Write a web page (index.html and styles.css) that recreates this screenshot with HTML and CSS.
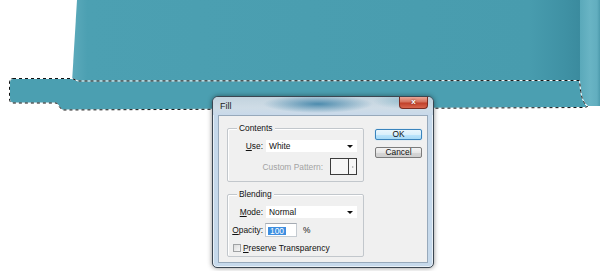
FILE: index.html
```html
<!DOCTYPE html>
<html lang="en">
<head>
    <meta charset="UTF-8">
    <title>Fill</title>
    <link rel="stylesheet" href="styles.css">
</head>
<body>
    <div class="canvas">
        <svg class="art" width="600" height="271" viewBox="0 0 600 271">
            <defs>
                <linearGradient id="body" x1="72" y1="0" x2="580" y2="0" gradientUnits="userSpaceOnUse">
                    <stop offset="0" stop-color="#5caabb"/>
                    <stop offset="0.03" stop-color="#4ca0b2"/>
                    <stop offset="0.9" stop-color="#489cae"/>
                    <stop offset="0.97" stop-color="#3f91a4"/>
                    <stop offset="1" stop-color="#3b8b9e"/>
                </linearGradient>
                <linearGradient id="side" x1="580" y1="0" x2="600" y2="0" gradientUnits="userSpaceOnUse">
                    <stop offset="0" stop-color="#5aa9ba"/>
                    <stop offset="0.5" stop-color="#69b4c4"/>
                    <stop offset="0.85" stop-color="#62aebf"/>
                    <stop offset="1" stop-color="#4d9bad"/>
                </linearGradient>
            </defs>
            <!-- tray body -->
            <polygon points="77,0 580,0 580,82 72,82" fill="url(#body)"/>
            <path d="M580 0 L600 0 L600 106 L588 106 Q581 100 580 88 Z" fill="url(#side)"/>
            <!-- selected base strip -->
            <path d="M13 78.5 L72 78.5 L78 81 L579.5 80.5 L580.5 90 Q582 102 587.5 106.5 L585 107.5 L62 110 L56.5 103 L13 103 Q9.5 103 9.5 99 L9.5 82 Q9.5 78.5 13 78.5 Z" fill="#4b9fb1"/>
            <path d="M13 78.5 L72 78.5 L78 81 L579.5 80.5 L580.5 90 Q582 102 587.5 106.5 L585 107.5 L62 110 L56.5 103 L13 103 Q9.5 103 9.5 99 L9.5 82 Q9.5 78.5 13 78.5 Z" fill="none" stroke="#fff" stroke-width="1"/>
            <path d="M13 78.5 L72 78.5 L78 81 L579.5 80.5 L580.5 90 Q582 102 587.5 106.5 L585 107.5 L62 110 L56.5 103 L13 103 Q9.5 103 9.5 99 L9.5 82 Q9.5 78.5 13 78.5 Z" fill="none" stroke="#111" stroke-width="1" stroke-dasharray="3 3"/>
        </svg>

        <div class="dialog">
            <div class="titlebar">
                <span class="title">Fill</span>
                <span class="close">x</span>
            </div>
            <div class="dialog-body">
                <div class="groups">
                    <div class="group group-contents">
                        <span class="legend">Contents</span>
                        <div class="row">
                            <span class="lbl"><u>U</u>se:</span>
                            <div class="select">White</div>
                        </div>
                        <div class="row row-pattern">
                            <span class="lbl-off">Custom Pattern:</span>
                            <div class="pattern">
                                <span class="swatch"></span>
                                <span class="pattern-arrow"></span>
                            </div>
                        </div>
                    </div>
                    <div class="group group-blending">
                        <span class="legend">Blending</span>
                        <div class="row">
                            <span class="lbl"><u>M</u>ode:</span>
                            <div class="select">Normal</div>
                        </div>
                        <div class="row row-opacity">
                            <span class="lbl"><u>O</u>pacity:</span>
                            <div class="field"><span class="sel-text">100</span></div>
                            <span class="unit">%</span>
                        </div>
                        <div class="row row-check">
                            <span class="check"></span>
                            <span class="check-label"><u>P</u>reserve Transparency</span>
                        </div>
                    </div>
                </div>
                <div class="buttons">
                    <div class="btn btn-ok">OK</div>
                    <div class="btn">Cancel</div>
                </div>
            </div>
        </div>
    </div>
</body>
</html>
```

FILE: styles.css
```css
body {
    margin: 0;
    padding: 0;
    background-color: #fff;
    font-family: "Liberation Sans", Arial, sans-serif;
    font-size: 8.4px;
    color: #111;
}
.canvas {
    position: relative;
    width: 600px;
    height: 271px;
    overflow: hidden;
}
.art {
    position: absolute;
    left: 0;
    top: 0;
    display: block;
}
.dialog {
    position: absolute;
    left: 212px;
    top: 96px;
    width: 222px;
    height: 172px;
    box-sizing: border-box;
    border: 1px solid #3b4651;
    border-radius: 6px 6px 5px 5px;
    background-color: #c6d9eb;
    box-shadow: 0 0 5px rgba(0, 0, 0, 0.45), inset 0 0 0 1px rgba(255, 255, 255, 0.6);
    padding: 0 5px 4px 5px;
    display: flex;
    flex-direction: column;
}
.titlebar {
    height: 18px;
    margin: 0 -5px;
    padding: 0 5px 0 7px;
    display: flex;
    align-items: flex-start;
    border-radius: 5px 5px 0 0;
    background:
        radial-gradient(ellipse 55px 9px at 105px 7px, rgba(45, 120, 160, 0.8), rgba(45, 120, 160, 0)),
        radial-gradient(ellipse 30px 8px at 190px 4px, rgba(70, 150, 175, 0.35), rgba(70, 150, 175, 0)),
        linear-gradient(#c2d3de, #cfdce6 60%, #c8d9ea);
}
.title {
    margin-top: 4px;
    font-size: 9px;
    color: #1b1b1b;
}
.close {
    margin-left: auto;
    width: 29px;
    height: 12px;
    box-sizing: border-box;
    border: 1px solid #7a2c22;
    border-top: none;
    border-radius: 0 0 4px 4px;
    background: linear-gradient(#e9a797, #d4715c 45%, #c1402a 55%, #d8664e);
    color: #fff;
    font-weight: bold;
    font-size: 8px;
    line-height: 10px;
    text-align: center;
    text-shadow: 0 0 2px #5a1a10;
}
.dialog-body {
    flex-grow: 1;
    box-sizing: border-box;
    border: 1px solid #97a9bb;
    background-color: #f0f0f0;
    display: flex;
    padding: 12px 5px 0 8px;
}
.groups {
    width: 137px;
}
.group {
    position: relative;
    box-sizing: border-box;
    border: 1px solid #c2c7cc;
    border-radius: 2px;
    box-shadow: inset 1px 1px 0 #fff;
    padding: 11px 6px 6px 0;
}
.group-blending {
    margin-top: 12px;
    padding-bottom: 4px;
}
.legend {
    position: absolute;
    top: -6px;
    left: 9px;
    padding: 0 2px;
    line-height: 10px;
    background-color: #f0f0f0;
}
.row {
    display: flex;
    align-items: center;
    height: 12px;
}
.lbl {
    width: 35px;
    text-align: right;
    margin-right: 3px;
}
.select {
    position: relative;
    flex-grow: 1;
    height: 12px;
    line-height: 12px;
    background-color: #fff;
    padding-left: 3px;
}
.select::after {
    content: "";
    position: absolute;
    right: 4px;
    top: 5px;
    border-left: 3px solid transparent;
    border-right: 3px solid transparent;
    border-top: 3px solid #111;
}
.row-pattern {
    justify-content: flex-end;
    height: 17px;
    margin-top: 6px;
}
.lbl-off {
    color: #a3a3a3;
    margin-right: 7px;
}
.pattern {
    display: flex;
    width: 27px;
    height: 17px;
    box-sizing: border-box;
    border: 1px solid #3c3c3c;
    background-color: #f6f6f6;
}
.swatch {
    width: 17px;
    border-right: 1px solid #3c3c3c;
}
.pattern-arrow {
    flex-grow: 1;
    position: relative;
}
.pattern-arrow::after {
    content: "";
    position: absolute;
    left: 3px;
    top: 7px;
    border-top: 1px solid transparent;
    border-bottom: 1px solid transparent;
    border-left: 2px solid #a8a8a8;
}
.row-opacity {
    height: 14px;
    margin-top: 5px;
}
.field {
    width: 32px;
    height: 14px;
    box-sizing: border-box;
    margin-left: -1px;
    border: 1px solid #c5cbd1;
    border-top-color: #a5abb3;
    background-color: #fff;
    padding: 2px 0 0 2px;
}
.sel-text {
    display: inline-block;
    line-height: 8px;
    padding: 0 2px;
    background-color: #3d8ee0;
    color: #fff;
}
.unit {
    margin-left: 6px;
}
.row-check {
    height: 9px;
    margin-top: 6px;
    padding-left: 5px;
}
.check {
    width: 8px;
    height: 8px;
    box-sizing: border-box;
    border: 1px solid #a0a2a4;
    background: linear-gradient(135deg, #dcdcdc, #f7f7f7);
    margin-right: 2px;
}
.buttons {
    margin-left: 11px;
    padding-top: 1px;
    display: flex;
    flex-direction: column;
    gap: 7px;
}
.btn {
    width: 47px;
    height: 11px;
    box-sizing: border-box;
    border: 1px solid #7b7b7b;
    border-radius: 2px;
    background: linear-gradient(#f4f4f4, #e6e6e6 50%, #d6d6d6 51%, #cfcfcf);
    text-align: center;
    line-height: 9px;
}
.btn-ok {
    border-color: #3a84bd;
    background: linear-gradient(#eaf6fd, #d9f0fc 50%, #bee6fd 51%, #a7d9f5);
    box-shadow: 0 0 1px #6ec3f0;
}
```
